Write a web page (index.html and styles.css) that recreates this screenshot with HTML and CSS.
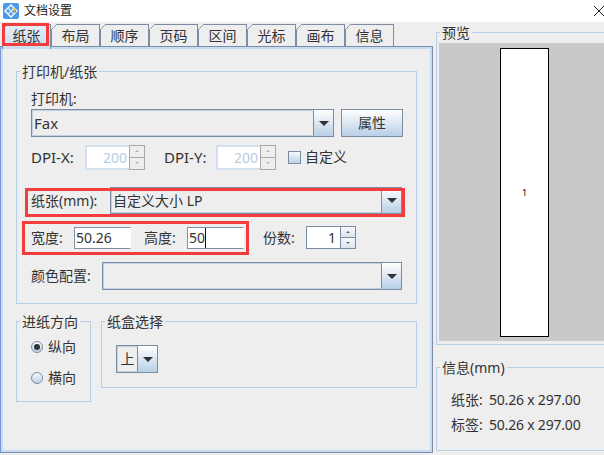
FILE: index.html
```html
<!DOCTYPE html>
<html lang="zh">
<head>
<meta charset="utf-8">
<title>文档设置</title>
<link rel="stylesheet" href="styles.css">
</head>
<body>
<div class="window">
  <header class="titlebar">
    <svg class="app-icon" viewBox="0 0 16 16" width="16" height="16">
      <rect width="16" height="16" rx="2" fill="#4a9ae8"/>
      <path d="M8 2 L14 8 L8 14 L2 8 Z" fill="none" stroke="#fff" stroke-width="1.4"/>
      <path d="M5 5 L11 11 M11 5 L5 11" stroke="#d8e9fb" stroke-width="1.3"/>
      <circle cx="11.5" cy="6.5" r="1.5" fill="#e8c93a"/>
      <circle cx="12.5" cy="8.5" r="0.9" fill="#d9534f"/>
    </svg>
    <span class="title">文档设置</span>
    <svg class="close" viewBox="0 0 10 10" width="10" height="10"><path d="M0 0 L10 10 M10 0 L0 10" stroke="#222" stroke-width="1" fill="none"/></svg>
  </header>
  <main class="main">
    <section class="left">
      <nav class="tabs">
        <span class="tab active">纸张</span>
        <span class="tab">布局</span>
        <span class="tab">顺序</span>
        <span class="tab">页码</span>
        <span class="tab">区间</span>
        <span class="tab">光标</span>
        <span class="tab">画布</span>
        <span class="tab">信息</span>
      </nav>
      <div class="panel">
        <fieldset class="group printer">
          <legend>打印机/纸张</legend>
          <div class="printer-body">
            <div class="line">打印机:</div>
            <div class="row">
              <div class="combo w-303"><span class="combo-text latin">Fax</span><span class="arrow"><i></i></span></div>
              <span class="button">属性</span>
            </div>
            <div class="row dpi">
              <span class="label w-54 latin">DPI-X:</span>
              <span class="spin disabled"><span class="spin-text">200</span><span class="steps"><b class="up"></b><b class="down"></b></span></span>
              <span class="label dpi-y latin">DPI-Y:</span>
              <span class="spin disabled"><span class="spin-text">200</span><span class="steps"><b class="up"></b><b class="down"></b></span></span>
              <span class="check"></span>
              <span class="label">自定义</span>
            </div>
            <div class="row paper">
              <span class="label w-79">纸张(mm):</span>
              <div class="combo w-292 h-27"><span class="combo-text">自定义大小 LP</span><span class="arrow"><i></i></span></div>
            </div>
            <div class="row size">
              <span class="label w-43">宽度:</span>
              <span class="field">50.26</span>
              <span class="label w-43 size-gap">高度:</span>
              <span class="field"><span class="caret">50</span></span>
              <span class="label copies">份数:</span>
              <span class="spin copies-spin"><span class="spin-text">1</span><span class="steps"><b class="up"></b><b class="down"></b></span></span>
            </div>
            <div class="row color">
              <span class="label w-71">颜色配置:</span>
              <div class="combo w-300"><span class="combo-text"></span><span class="arrow"><i></i></span></div>
            </div>
          </div>
        </fieldset>
        <div class="lower">
          <fieldset class="group feed">
            <legend>进纸方向</legend>
            <div class="feed-body">
              <div class="radio-row"><span class="radio on"></span>纵向</div>
              <div class="radio-row"><span class="radio"></span>横向</div>
            </div>
          </fieldset>
          <fieldset class="group tray">
            <legend>纸盒选择</legend>
            <div class="tray-body">
              <div class="combo w-42"><span class="combo-text center">上</span><span class="arrow"><i></i></span></div>
            </div>
          </fieldset>
        </div>
      </div>
    </section>
    <aside class="right">
      <fieldset class="group preview">
        <legend>预览</legend>
        <div class="canvas"><div class="sheet">1</div></div>
      </fieldset>
      <fieldset class="group info">
        <legend>信息(mm)</legend>
        <div class="info-body">
          <div class="info-row"><span class="info-key">纸张:</span>50.26 x 297.00</div>
          <div class="info-row"><span class="info-key">标签:</span>50.26 x 297.00</div>
        </div>
      </fieldset>
    </aside>
  </main>
  <div class="mark mark-tab"></div>
  <div class="mark mark-paper"></div>
  <div class="mark mark-size"></div>
</div>
</body>
</html>
```
FILE: styles.css
```css
* { box-sizing: border-box; }
html, body { margin: 0; padding: 0; }
body {
  font-family: "Noto Sans", "Noto Sans CJK SC", sans-serif;
  font-size: 14px;
  line-height: 20px;
  color: #333;
  background: #eee;
}
.window { position: relative; width: 604px; height: 455px; overflow: hidden; background: #eee; }

.titlebar { height: 22px; background: #fff; display: flex; align-items: center; padding-left: 3px; color: #222; }
.app-icon { flex: none; }
.title { margin-left: 5px; font-size: 12px; }
.close { margin-left: auto; }

.main { display: flex; align-items: flex-start; }
.left { width: 434px; flex: none; padding-top: 2px; }
.right { width: 170px; flex: none; margin-left: 2px; margin-right: -2px; }

.tabs { display: flex; height: 22px; padding-left: 2px; }
.tab {
  position: relative;
  width: 49px;
  height: 23px;
  border: 1px solid #7b8ca3;
  text-align: center;
  line-height: 21px;
  background: #eee;
}
.tab::before {
  content: "";
  position: absolute;
  left: -1px;
  top: -1px;
  width: 6px;
  height: 6px;
  background: linear-gradient(135deg, #eee 42%, #8c9bb0 42%, #8c9bb0 58%, transparent 58%);
}
.tab.active {
  z-index: 1;
  height: 25px;
  border-bottom: 0;
  background: linear-gradient(#e6eef7, #c8dcf0);
}

.panel {
  width: 433px;
  height: 407px;
  border: 1px solid #7b8ca3;
  border-left-color: #7497d8;
  box-shadow: inset 2px 2px 0 #c5dcf2, inset -2px -2px 0 #c5dcf2;
  padding: 14px 0 0 15px;
}

.group { margin: 0; padding: 0; border: 1px solid #b6cfe9; min-width: 0; }
.group legend { margin-left: 3px; padding: 0 2px; height: 20px; line-height: 22px; }
.printer { width: 401px; }

.printer-body { padding: 8px 0 13px 14px; }
.line { height: 20px; }
.latin { font-size: 15px; }
.row { display: flex; align-items: center; }
.label { flex: none; white-space: nowrap; }
.w-54 { width: 54px; }
.w-79 { width: 79px; }
.w-43 { width: 43px; }
.w-71 { width: 71px; }
.dpi { margin-top: 7px; height: 26px; }
.dpi-y { margin-left: 19px; width: 52px; }
.paper { margin-top: 17px; height: 27px; }
.size { margin-top: 12px; height: 23px; }
.color { margin-top: 13px; height: 28px; }
.size-gap { margin-left: 13px; }
.copies { margin-left: 19px; width: 43px; }

.combo {
  display: flex;
  height: 28px;
  border: 1px solid #7b8ca3;
  flex: none;
}
.h-27 { height: 27px; }
.w-303 { width: 303px; }
.w-292 { width: 292px; }
.w-300 { width: 300px; }
.w-42 { width: 42px; }
.combo-text {
  flex: 1;
  border: 1px solid #c3d0de;
  border-right-color: #7b8ca3;
  padding-left: 1px;
  line-height: 24px;
  background: #eee;
}
.combo-text.center { text-align: center; padding-left: 0; }
.arrow {
  width: 19px;
  flex: none;
  display: flex;
  align-items: center;
  justify-content: center;
  background: linear-gradient(#fff, #b8cfe6);
}
.arrow i {
  width: 0;
  height: 0;
  border-left: 5px solid transparent;
  border-right: 5px solid transparent;
  border-top: 5px solid #333;
}
.button {
  margin-left: 7px;
  width: 62px;
  height: 28px;
  border: 1px solid #7b8ca3;
  background: linear-gradient(#fff, #b8cfe6);
  text-align: center;
  line-height: 26px;
  flex: none;
}

.spin {
  display: flex;
  width: 60px;
  height: 25px;
  flex: none;
}
.spin-text {
  flex: 1;
  text-align: right;
  padding-right: 2px;
  background: #fff;
  border: 1px solid #7b8ca3;
  border-right: 0;
  line-height: 23px;
}
.steps { width: 16px; display: flex; flex-direction: column; flex: none; border: 1px solid #7b8ca3; }
.steps b { flex: 1; position: relative; background: linear-gradient(#f6f9fc, #dbe5ef); display: block; }
.steps b + b { border-top: 1px solid #7b8ca3; }
.steps b::after {
  content: "";
  position: absolute;
  left: 5px;
  top: 4px;
  border-left: 2px solid transparent;
  border-right: 2px solid transparent;
}
.steps .up::after { border-bottom: 2px solid #667; }
.steps .down::after { border-top: 2px solid #667; }

.spin.disabled .spin-text { color: #b8cde4; border-color: #d3e0ef; border-width: 2px 0 2px 2px; line-height: 21px; }
.spin.disabled .steps { border-color: #a8a8a8; }
.spin.disabled .steps b + b { border-top-color: #a8a8a8; }
.spin.disabled .steps b { background: #eee; }
.spin.disabled .steps b::after { opacity: .45; }
.copies-spin { width: 50px; height: 23px; }
.copies-spin .spin-text { line-height: 21px; padding-right: 4px; }

.check {
  margin-left: 12px;
  width: 13px;
  height: 13px;
  border: 1px solid #7b8ca3;
  background: linear-gradient(#f4f8fb, #bcd2e8);
  flex: none;
}
.check + .label { margin-left: 4px; }

.field {
  width: 57px;
  height: 22px;
  background: #fff;
  border: 1px solid #8292a6;
  border-right-color: #fff;
  line-height: 20px;
  padding-left: 1px;
  flex: none;
}
.caret { display: inline-block; height: 20px; border-right: 1px solid #111; }

.lower { display: flex; align-items: flex-start; gap: 10px; margin-top: 7px; }
.feed { width: 75px; height: 91px; }
.tray { width: 316px; height: 77px; }
.feed-body { padding: 5px 0 0 14px; }
.radio-row { display: flex; align-items: flex-end; height: 21px; }
.radio-row + .radio-row { margin-top: 10px; }
.radio {
  position: relative;
  align-self: center;
  width: 12px;
  height: 12px;
  margin-right: 5px;
  border: 1px solid #7b8ca3;
  border-radius: 50%;
  background: linear-gradient(#f6f9fc, #bcd2e8);
  flex: none;
}
.radio.on::after {
  content: "";
  position: absolute;
  left: 2px;
  top: 2px;
  width: 6px;
  height: 6px;
  border-radius: 50%;
  background: #333;
}
.tray-body { padding: 14px 0 0 14px; }

.preview { height: 323px; }
.canvas {
  margin: 1px 0 2px 2px;
  height: 298px;
  background: #c9c9c9;
  padding: 5px 0 4px 61px;
}
.sheet {
  width: 49px;
  height: 289px;
  border: 1px solid #000;
  background: #fff;
  display: flex;
  align-items: center;
  justify-content: center;
  font-size: 9px;
  color: #000;
}
.info { margin-top: 12px; height: 94px; }
.info-body { padding: 13px 0 0 14px; }
.info-row { display: flex; height: 20px; letter-spacing: -0.2px; }
.info-row + .info-row { margin-top: 5px; }
.info-key { width: 38px; flex: none; letter-spacing: 0; }

.mark { position: absolute; border: 3px solid #f33c3c; pointer-events: none; z-index: 2; }
.mark-tab { left: 2px; top: 23px; width: 47px; height: 23px; }
.mark-paper { left: 25px; top: 188px; width: 380px; height: 29px; }
.mark-size { left: 22px; top: 221px; width: 227px; height: 34px; }
```
